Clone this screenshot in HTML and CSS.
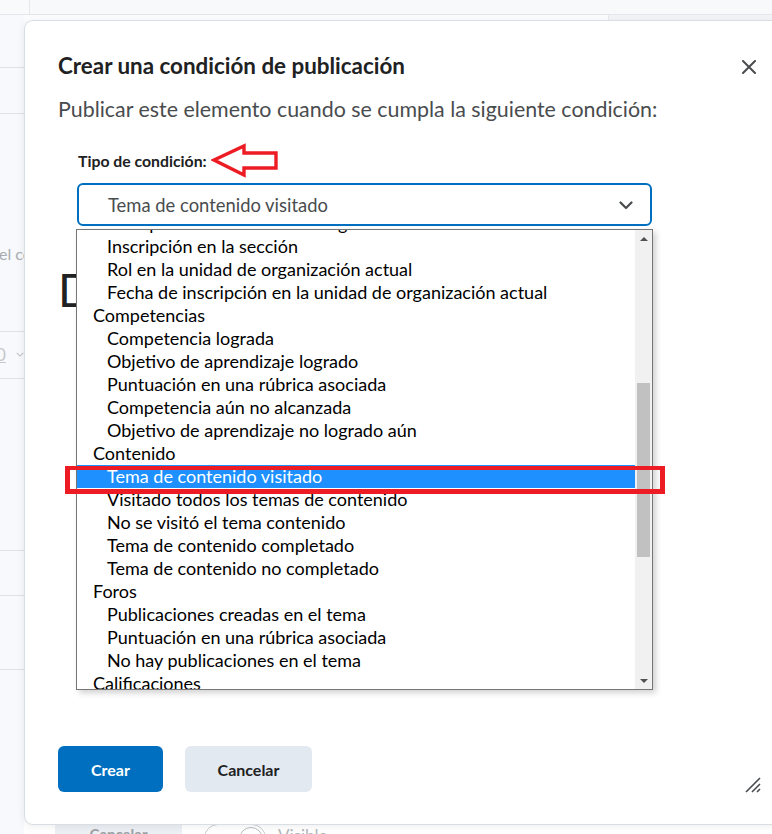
FILE: index.html
```html
<!DOCTYPE html>
<html lang="es">
<head>
<meta charset="utf-8">
<title>Crear una condición de publicación</title>
<link rel="stylesheet" href="styles.css">
</head>
<body>
<div class="page">
  <div class="topbar"><div class="tb-left"></div><div class="tb-main"></div></div>
  <div class="page-body">
    <div class="side">
      <div class="srow s1"></div>
      <div class="srow s2"></div>
      <div class="srow s3"><span class="side-text">del contenido</span></div>
      <div class="srow s4"><span class="side-sel"><span class="u">0</span><svg width="11" height="7" viewBox="0 0 11 7"><path d="M1 1.2 5.5 5.5 10 1.2" fill="none" stroke="#c3c7cb" stroke-width="1.4"/></svg></span></div>
      <div class="srow s5"></div>
      <div class="srow s6"></div>
      <div class="srow s7"></div>
      <div class="srow s8"></div>
    </div>
    <div class="main">
      <div class="subbar"><div class="sb-a"></div><div class="sb-b"></div></div>
      <div class="filler"></div>
      <div class="bottomrow">
        <div class="bg-btn">Cancelar</div>
        <div class="bg-toggle"><span class="knob"></span></div>
        <span class="bg-label">Visible</span>
      </div>
    </div>
  </div>
</div>

<div class="dialog" role="dialog">
  <div class="dlg-head">
    <h1 class="dlg-title">Crear una condición de publicación</h1>
    <button class="close" aria-label="Cerrar"><svg width="14" height="14" viewBox="0 0 14 14"><path d="M1 1 13 13M13 1 1 13" stroke="#494c4e" stroke-width="2" stroke-linecap="round"/></svg></button>
  </div>
  <p class="dlg-sub">Publicar este elemento cuando se cumpla la siguiente condición:</p>
  <div class="field">
    <label class="field-label">Tipo de condición:</label>
    <div class="select">
      <span>Tema de contenido visitado</span>
      <svg class="chev" width="14" height="9" viewBox="0 0 14 9"><path d="M1.5 1.5 7 7 12.5 1.5" fill="none" stroke="#494c4e" stroke-width="2.2" stroke-linecap="round" stroke-linejoin="round"/></svg>
    </div>
  </div>
  <h2 class="bg-head">Detalles</h2>
  <div class="dlg-foot">
    <button class="btn btn-primary">Crear</button>
    <button class="btn btn-secondary">Cancelar</button>
  </div>
  <svg class="resize" width="16" height="16" viewBox="0 0 16 16"><path d="M1 15 15 1M7 15 15 7M12 15 15 12" stroke="#494c4e" stroke-width="1.6"/></svg>
</div>

<div class="listbox">
  <div class="list-area">
    <ul class="opts">
      <li class="opt">Inscripción en la unidad de organización</li>
      <li class="opt">Inscripción en la sección</li>
      <li class="opt">Rol en la unidad de organización actual</li>
      <li class="opt">Fecha de inscripción en la unidad de organización actual</li>
      <li class="grp">Competencias</li>
      <li class="opt">Competencia lograda</li>
      <li class="opt">Objetivo de aprendizaje logrado</li>
      <li class="opt">Puntuación en una rúbrica asociada</li>
      <li class="opt">Competencia aún no alcanzada</li>
      <li class="opt">Objetivo de aprendizaje no logrado aún</li>
      <li class="grp">Contenido</li>
      <li class="opt sel">Tema de contenido visitado</li>
      <li class="opt">Visitado todos los temas de contenido</li>
      <li class="opt">No se visitó el tema contenido</li>
      <li class="opt">Tema de contenido completado</li>
      <li class="opt">Tema de contenido no completado</li>
      <li class="grp">Foros</li>
      <li class="opt">Publicaciones creadas en el tema</li>
      <li class="opt">Puntuación en una rúbrica asociada</li>
      <li class="opt">No hay publicaciones en el tema</li>
      <li class="grp">Calificaciones</li>
      <li class="opt">Calificación recibida</li>
    </ul>
  </div>
  <div class="scrollbar">
    <div class="sb-btn"><span class="tri-up"></span></div>
    <div class="sb-track"><div class="sb-thumb"></div></div>
    <div class="sb-btn"><span class="tri-down"></span></div>
  </div>
</div>

<div class="mark-box"></div>
<svg class="mark-arrow" width="70" height="38" viewBox="0 0 70 38"><path d="M3 17 33 3 33 10 65 10 65 25 33 25 33 32Z" fill="none" stroke="#ed1c24" stroke-width="3.4" stroke-linejoin="miter"/></svg>
</body>
</html>
```

FILE: styles.css
```css
* { box-sizing: border-box; }
html, body { margin: 0; padding: 0; width: 772px; height: 834px; overflow: hidden; }
body {
  position: relative;
  font-family: Lato, "Open Sans", "Liberation Sans", sans-serif;
  background: #f9fafb;
  color: #202122;
}

/* background page */
.page { display: flex; flex-direction: column; height: 834px; }
.topbar { height: 15px; display: flex; border-bottom: 1px solid #e3e6ea; }
.tb-left { width: 30px; border-right: 1px solid #e6e8eb; background: #f9fafb; }
.tb-main { flex: 1; background: #f8f9fb; }
.page-body { flex: 1; display: flex; }
.side { width: 24px; flex: none; display: flex; flex-direction: column; background: #f7f9fc; overflow: hidden; white-space: nowrap; }
.srow { border-bottom: 1px solid #dfe2e6; position: relative; flex: none; }
.s1 { height: 53px; }
.s2 { height: 46px; }
.s3 { height: 218px; }
.s4 { height: 47px; }
.s5 { height: 172px; }
.s6 { height: 45px; }
.s7 { height: 74px; }
.s8 { flex: 1; border-bottom: none; }
.side-text { display: block; margin-left: -10px; padding-top: 130px; font-size: 16px; color: #a9adb1; }
.side-sel { display: flex; gap: 10px; align-items: center; margin-left: -4px; padding-top: 12px; font-size: 17px; color: #c3c7cb; }
.side-sel .u { text-decoration: underline; }
.main { flex: 1; display: flex; flex-direction: column; }
.subbar { height: 6px; display: flex; }
.sb-a { width: 585px; background: #fbfcfd; border-right: 1px solid #e6e8eb; }
.sb-b { flex: 1; background: #f1f3f6; }
.filler { flex: 1; }
.bottomrow { height: 12px; display: flex; align-items: flex-start; background: #ffffff; overflow: hidden; }
.bg-btn { margin-left: 31px; width: 127px; height: 20px; background: #eceff3; color: #9da1a6; font-size: 15px; font-weight: 700; padding-top: 3px; text-align: center; }
.bg-toggle { margin-left: 22px; margin-top: 2px; width: 62px; height: 28px; border: 1px solid #c7ccd1; border-radius: 14px; position: relative; }
.knob { position: absolute; right: 2px; top: 2px; width: 24px; height: 24px; border-radius: 50%; border: 1px solid #b8bdc3; background: #fff; }
.bg-label { margin-left: 12px; padding-top: 3px; font-size: 17px; color: #b3b7bb; }

/* dialog */
.dialog {
  position: absolute; left: 25px; top: 21px; width: 760px; height: 803px;
  background: #ffffff; border-radius: 8px;
  box-shadow: 0 0 0 1px #d9dee4, -1px 2px 8px rgba(0, 0, 0, 0.08);
  padding: 30px 26px 32px 33px;
  display: flex; flex-direction: column;
}
.dlg-head { display: flex; justify-content: space-between; align-items: center; }
.dlg-title { margin: 0; font-size: 22.4px; line-height: 30px; font-weight: 700; color: #202122; }
.close { width: 20px; height: 20px; padding: 0; border: 0; background: none; display: flex; align-items: center; justify-content: center; margin-top: 2px; }
.dlg-sub { margin: 13px 0 0; font-size: 21.4px; line-height: 30px; color: #494c4e; white-space: nowrap; }
.field { margin-top: 27px; padding-left: 20px; display: flex; flex-direction: column; align-items: flex-start; }
.field-label { font-size: 15.8px; line-height: 20px; font-weight: 700; color: #202122; }
.select {
  margin-top: 12px; margin-left: -1px; width: 575px; height: 43px;
  border: 2px solid #006fbf; border-radius: 6px;
  display: flex; align-items: center; justify-content: space-between;
  padding: 0 17px 0 29px; font-size: 18.4px; color: #494c4e;
}
.chev { margin-top: 1px; }
.bg-head { margin: 41px 0 0; font-size: 46px; line-height: 46px; font-weight: 400; color: #202122; white-space: nowrap; }
.dlg-foot { margin-top: auto; display: flex; gap: 22px; }
.btn { height: 46px; border: 0; border-radius: 6px; font-family: inherit; font-size: 16px; font-weight: 700; }
.btn-primary { width: 105px; background: #006fbf; color: #ffffff; }
.btn-secondary { width: 127px; background: #e3e9f1; color: #202122; }
.resize { position: absolute; left: 720px; top: 756px; }

/* open list box */
.listbox {
  position: absolute; left: 76px; top: 229px; width: 577px; height: 461px;
  border: 1px solid #767676; background: #ffffff;
  box-shadow: 3px 3px 6px rgba(0, 0, 0, 0.18);
  display: flex;
}
.list-area { flex: 1; overflow: hidden; }
.opts { list-style: none; margin: -18px 0 0; padding: 0; }
.opts li { height: 23px; line-height: 23px; font-size: 18px; color: #000000; white-space: nowrap; }
.grp { padding-left: 16px; }
.opt { padding-left: 30px; }
.opt.sel { background: #1e90ff; color: #ffffff; }
.scrollbar { width: 17px; background: #f1f1f1; display: flex; flex-direction: column; }
.sb-btn { height: 17px; display: flex; align-items: center; justify-content: center; }
.tri-up { width: 0; height: 0; border-left: 4px solid transparent; border-right: 4px solid transparent; border-bottom: 4px solid #505050; }
.tri-down { width: 0; height: 0; border-left: 4px solid transparent; border-right: 4px solid transparent; border-top: 4px solid #505050; }
.sb-track { flex: 1; padding: 0 2px; }
.sb-thumb { margin-top: 136px; height: 174px; background: #c1c1c1; }

/* annotations */
.mark-box { position: absolute; left: 65px; top: 466px; width: 600px; height: 28px; border: solid #ed1c24; border-width: 4px 5px 5px 5px; }
.mark-arrow { position: absolute; left: 211px; top: 143px; }
```
